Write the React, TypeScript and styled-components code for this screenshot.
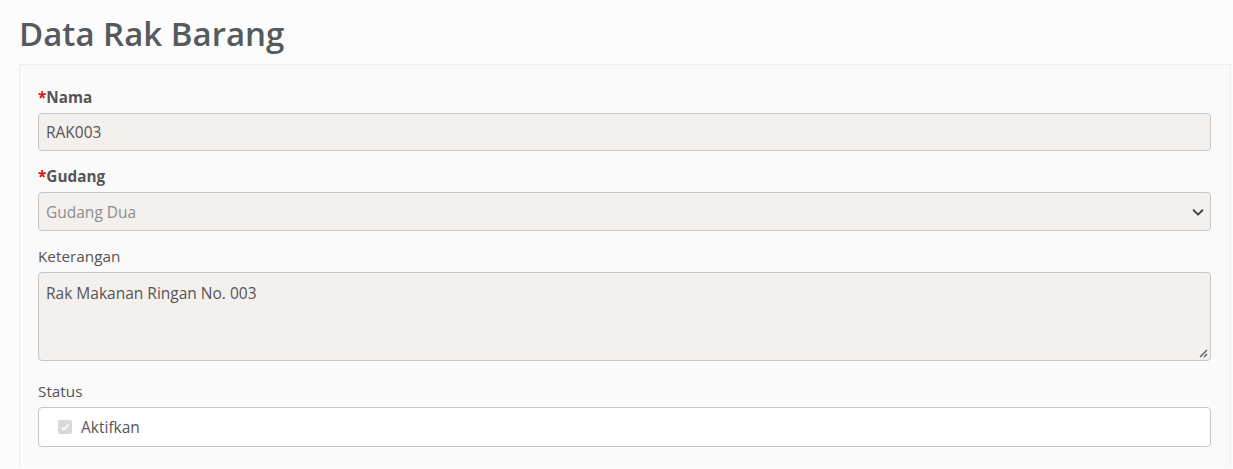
import React from "react";
import styled, { createGlobalStyle } from "styled-components";

const Global = createGlobalStyle`
  html, body { margin: 0; padding: 0; background: #fcfcfc; }
  body { font-family: "Open Sans", "Noto Sans", sans-serif; color: #555; }
  * { box-sizing: border-box; }
`;

const Page = styled.div`
  padding: 12px 2px 0 19px;
`;

const Title = styled.h1`
  margin: 0 0 8px 0;
  font-size: 33px;
  font-weight: 600;
  line-height: 44px;
  color: #555a5c;
`;

const Card = styled.div`
  background: #fafafa;
  border: 1px solid #eeeeee;
  border-bottom: none;
  padding: 22px 19px 20px 18px;
  display: flex;
  flex-direction: column;
  gap: 15px;
`;

const Group = styled.div<{ $extra?: number }>`
  display: flex;
  flex-direction: column;
  gap: 6px;
  margin-bottom: ${(p) => p.$extra ?? 0}px;
`;

const Label = styled.label<{ $bold?: boolean }>`
  font-size: 15.3px;
  line-height: 20px;
  font-weight: ${(p) => (p.$bold ? 700 : 400)};
  color: #555;
`;

const Req = styled.span`
  color: #d11;
`;

const Field = styled.div<{ $h: number; $white?: boolean; $muted?: boolean; $top?: boolean }>`
  position: relative;
  height: ${(p) => p.$h}px;
  background: ${(p) => (p.$white ? "#fff" : "#f3f0ed")};
  border: 1px solid #c5c5c5;
  border-radius: 4px;
  padding: ${(p) => (p.$top ? "10px 7px" : "0 7px")};
  display: flex;
  align-items: ${(p) => (p.$top ? "flex-start" : "center")};
  font-size: 15.5px;
  line-height: 20px;
  color: ${(p) => (p.$muted ? "#8d8d8d" : "#555")};
`;

const Chevron = styled.svg`
  position: absolute;
  right: 5px;
  top: 50%;
  transform: translateY(-50%);
`;

const Grip = styled.svg`
  position: absolute;
  right: 2px;
  bottom: 2px;
`;

const CheckRow = styled.div`
  display: flex;
  align-items: center;
  gap: 9px;
  padding-left: 12px;
  font-size: 15.5px;
  color: #555;
`;

const Box = styled.span`
  width: 14px;
  height: 14px;
  border-radius: 2px;
  background: #d9d9d9;
  display: inline-flex;
  align-items: center;
  justify-content: center;
`;

export default function App() {
  return (
    <>
      <Global />
      <Page>
        <Title>Data Rak Barang</Title>
        <Card>
          <Group>
            <Label $bold><Req>*</Req>Nama</Label>
            <Field $h={38}>RAK003</Field>
          </Group>
          <Group>
            <Label $bold><Req>*</Req>Gudang</Label>
            <Field $h={39} $muted>
              Gudang Dua
              <Chevron width="14" height="14" viewBox="0 0 16 16">
                <path d="M3 6l5 5 5-5" fill="none" stroke="#444" strokeWidth="2.2" strokeLinecap="round" strokeLinejoin="round" />
              </Chevron>
            </Field>
          </Group>
          <Group $extra={5}>
            <Label>Keterangan</Label>
            <Field $h={89} $top>
              Rak Makanan Ringan No. 003
              <Grip width="10" height="10" viewBox="0 0 10 10">
                <path d="M9 2L2 9M9 6L6 9" stroke="#555" strokeWidth="1.2" />
              </Grip>
            </Field>
          </Group>
          <Group>
            <Label>Status</Label>
            <Field $h={40} $white>
              <CheckRow>
                <Box>
                  <svg width="10" height="10" viewBox="0 0 10 10">
                    <path d="M1.5 5.2l2.3 2.3L8.5 2.5" fill="none" stroke="#fff" strokeWidth="1.6" />
                  </svg>
                </Box>
                Aktifkan
              </CheckRow>
            </Field>
          </Group>
        </Card>
      </Page>
    </>
  );
}
